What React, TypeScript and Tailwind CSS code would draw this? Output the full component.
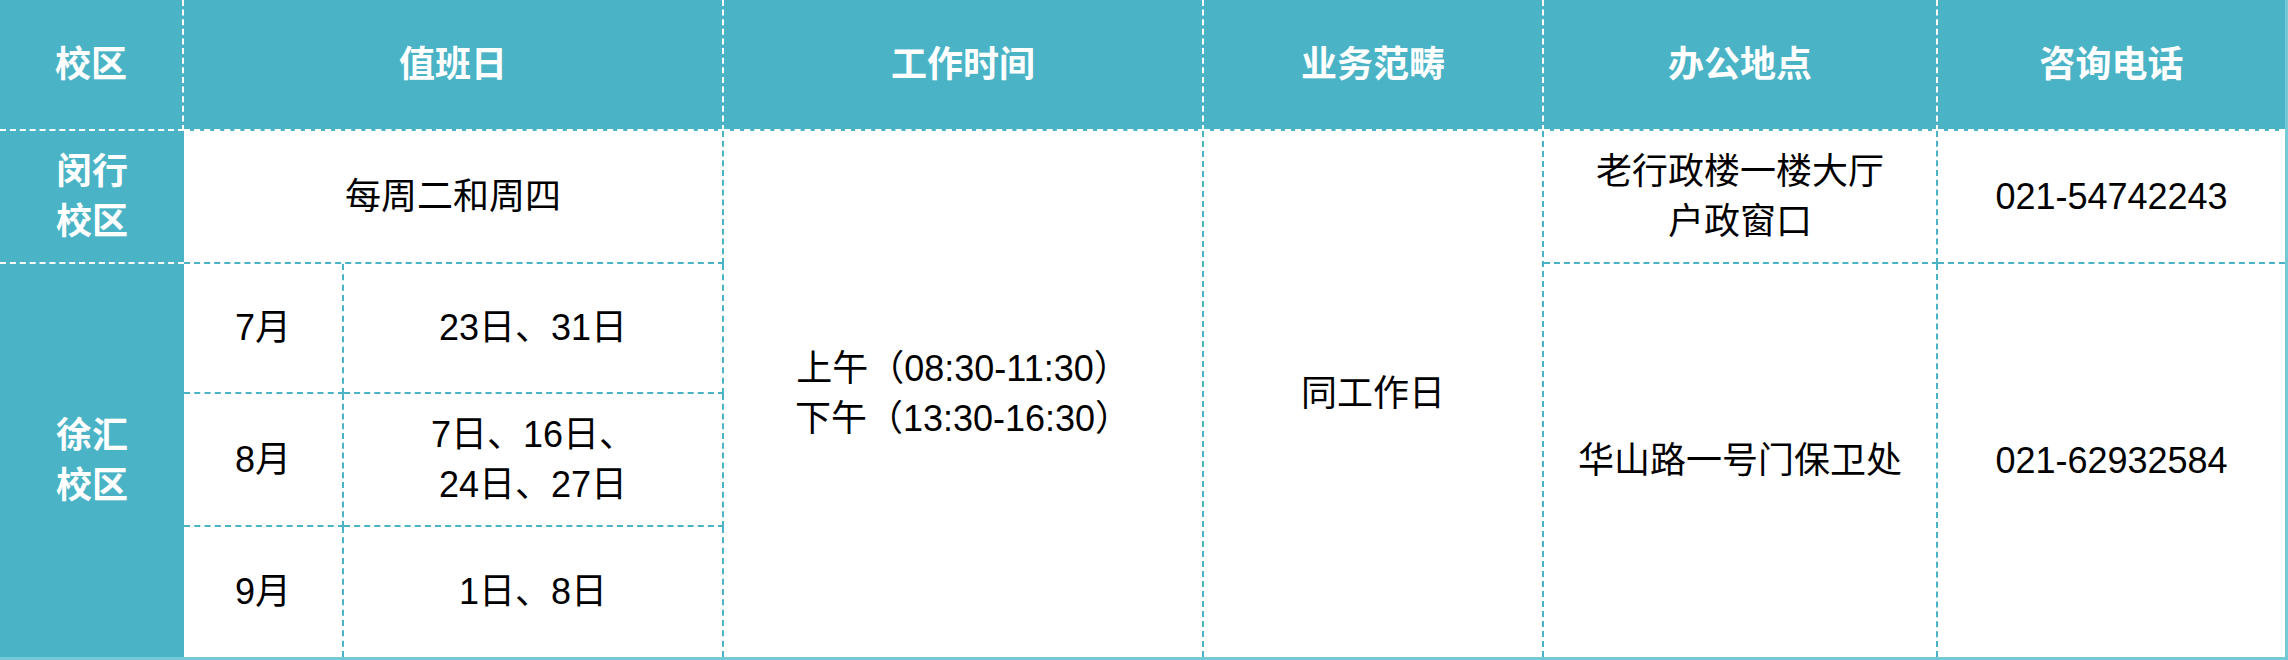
import React from "react";

const H =
  "flex items-center justify-center bg-[#4ab4c6] text-white font-bold border-white border-dashed border-b-2";
const L =
  "flex flex-col items-center justify-center bg-[#4ab4c6] text-white font-bold leading-[50px]";
const B =
  "flex flex-col items-center justify-center text-center leading-[50px] border-[#4ab4c6] border-dashed";

export default function App() {
  return (
    <div className="grid h-[660px] w-[2288px] grid-cols-[184px_160px_380px_480px_340px_394px_347px] grid-rows-[131px_133px_130px_133px_130px] border-b-[3px] border-r-[3px] border-[#74c9d7] bg-white font-['Liberation_Sans','Noto_Sans_CJK_SC',sans-serif] text-[36px] text-black">
      {/* header */}
      <div className={`${H} col-start-1 row-start-1 border-r-2`}>校区</div>
      <div className={`${H} col-start-2 col-span-2 row-start-1 border-r-2`}>值班日</div>
      <div className={`${H} col-start-4 row-start-1 border-r-2`}>工作时间</div>
      <div className={`${H} col-start-5 row-start-1 border-r-2`}>业务范畴</div>
      <div className={`${H} col-start-6 row-start-1 border-r-2`}>办公地点</div>
      <div className={`${H} col-start-7 row-start-1`}>咨询电话</div>

      {/* left column */}
      <div className={`${L} col-start-1 row-start-2 border-b-2 border-dashed border-white`}>
        <span>闵行</span>
        <span>校区</span>
      </div>
      <div className={`${L} col-start-1 row-start-3 row-span-3`}>
        <span>徐汇</span>
        <span>校区</span>
      </div>

      {/* 值班日 */}
      <div className={`${B} col-start-2 col-span-2 row-start-2 border-b-2 border-r-2`}>每周二和周四</div>
      <div className={`${B} col-start-2 row-start-3 border-b-2 border-r-2`}>7月</div>
      <div className={`${B} col-start-3 row-start-3 border-b-2 border-r-2`}>23日、31日</div>
      <div className={`${B} col-start-2 row-start-4 border-b-2 border-r-2`}>8月</div>
      <div className={`${B} col-start-3 row-start-4 border-b-2 border-r-2`}>
        <span>7日、16日、</span>
        <span>24日、27日</span>
      </div>
      <div className={`${B} col-start-2 row-start-5 border-r-2`}>9月</div>
      <div className={`${B} col-start-3 row-start-5 border-r-2`}>1日、8日</div>

      {/* 工作时间 */}
      <div className={`${B} col-start-4 row-start-2 row-span-4 border-r-2`}>
        <span>上午（08:30-11:30）</span>
        <span>下午（13:30-16:30）</span>
      </div>

      {/* 业务范畴 */}
      <div className={`${B} col-start-5 row-start-2 row-span-4 border-r-2`}>同工作日</div>

      {/* 办公地点 */}
      <div className={`${B} col-start-6 row-start-2 border-b-2 border-r-2`}>
        <span>老行政楼一楼大厅</span>
        <span>户政窗口</span>
      </div>
      <div className={`${B} col-start-6 row-start-3 row-span-3 border-r-2`}>华山路一号门保卫处</div>

      {/* 咨询电话 */}
      <div className={`${B} col-start-7 row-start-2 border-b-2`}>021-54742243</div>
      <div className={`${B} col-start-7 row-start-3 row-span-3`}>021-62932584</div>
    </div>
  );
}
